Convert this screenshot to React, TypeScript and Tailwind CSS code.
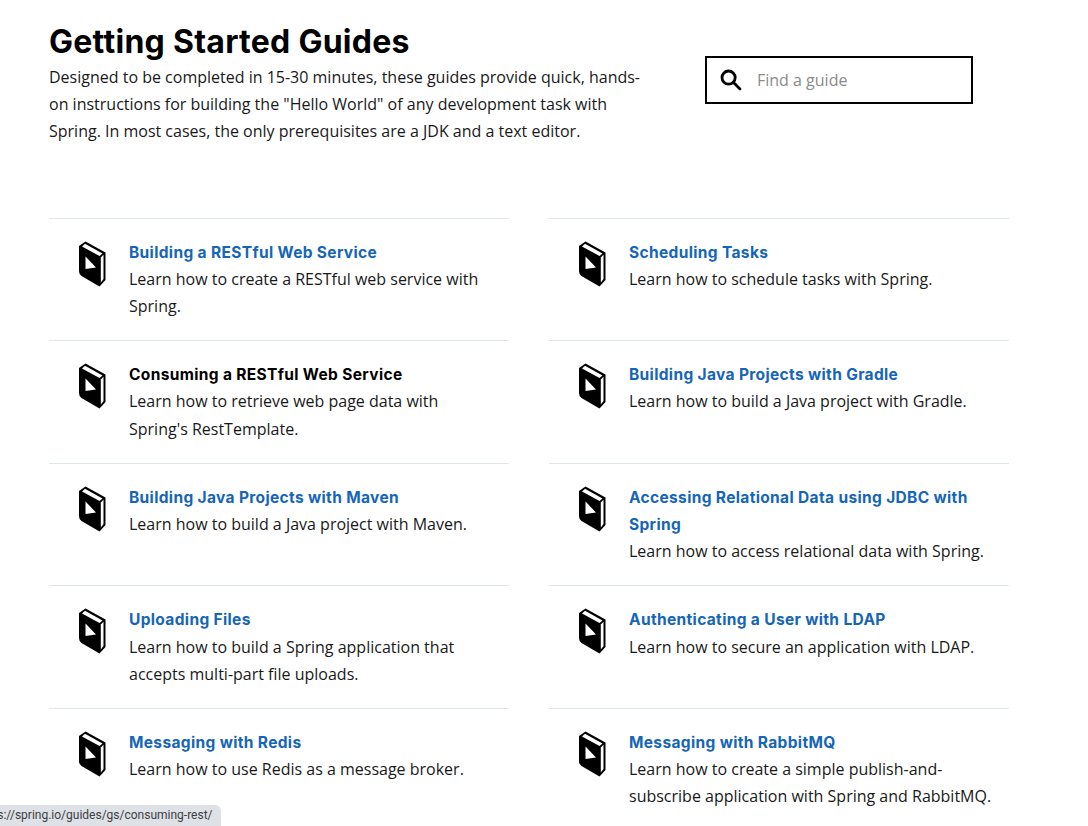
const guides = [
  ["Building a RESTful Web Service", "Learn how to create a RESTful web service with Spring."],
  ["Scheduling Tasks", "Learn how to schedule tasks with Spring."],
  ["Consuming a RESTful Web Service", "Learn how to retrieve web page data with Spring's RestTemplate."],
  ["Building Java Projects with Gradle", "Learn how to build a Java project with Gradle."],
  ["Building Java Projects with Maven", "Learn how to build a Java project with Maven."],
  ["Accessing Relational Data using JDBC with Spring", "Learn how to access relational data with Spring."],
  ["Uploading Files", "Learn how to build a Spring application that accepts multi-part file uploads."],
  ["Authenticating a User with LDAP", "Learn how to secure an application with LDAP."],
  ["Messaging with Redis", "Learn how to use Redis as a message broker."],
  ["Messaging with RabbitMQ", "Learn how to create a simple publish-and-subscribe application with Spring and RabbitMQ."],
];

const BookIcon = () => (
  <svg width="28" height="46" viewBox="0 0 28 46" className="shrink-0">
    <path d="M7.5 0.5 L27.5 11.5 L27.5 39 L21.5 45.5 L3.5 35 Q1 33.5 1 30 L1 5 Z" fill="#000" />
    <path d="M7 2.8 L24.5 12.5 L21.5 15 L4 5.5 Z" fill="#fff" />
    <path d="M22.8 16.5 L25.5 13.8 L25.5 38 L22.8 41.5 Z" fill="#fff" />
    <path d="M7.5 15.5 L18 26.5 L7.5 28 Z" fill="#fff" />
  </svg>
);

const GuideRow = ({ title, text, active }: { title: string; text: string; active: boolean }) => (
  <div className="flex gap-[23px] border-t border-[#dfe8e8] py-[20px] pr-[12px] pl-[29px]">
    <div className="pt-[2px]">
      <BookIcon />
    </div>
    <div>
      <div
        className={`font-['Inter',sans-serif] text-[15.5px] font-bold tracking-[0.35px] ${active ? "text-[#000]" : "text-[#1565b8]"}`}
      >
        {title}
      </div>
      <div className="text-[#191919]">{text}</div>
    </div>
  </div>
);

export default function App() {
  return (
    <div className="relative h-screen overflow-hidden bg-white pl-[49px] font-['Open_Sans',sans-serif] text-[16px] leading-[27.2px] text-[#191919]">
      <div className="flex h-[217.6px] items-start">
        <div className="w-[600px] pt-[21px]">
          <h1 className="font-['Inter',sans-serif] text-[32px] font-bold leading-[41px] tracking-[0.27px] text-black">
            Getting Started Guides
          </h1>
          <p className="mt-[2px]">
            Designed to be completed in 15-30 minutes, these guides provide quick, hands-on instructions for building
            the "Hello World" of any development task with Spring. In most cases, the only prerequisites are a JDK and
            a text editor.
          </p>
        </div>
        <div className="mt-[56px] ml-[56px] flex h-[48px] w-[268px] items-center border-2 border-black pl-[13px]">
          <svg width="22" height="22" viewBox="0 0 22 22" fill="none" stroke="#000" strokeWidth="2.8">
            <circle cx="8.6" cy="8.6" r="6.6" />
            <path d="M13.5 13.5 L20 20" strokeLinecap="round" />
          </svg>
          <span className="mt-[2px] ml-[15px] text-[#8a8a8a]">Find a guide</span>
        </div>
      </div>
      <div className="grid w-[960px] grid-cols-2 gap-x-[40px]">
        {guides.map(([title, text]) => (
          <GuideRow key={title} title={title} text={text} active={title === "Consuming a RESTful Web Service"} />
        ))}
      </div>
      <div className="absolute bottom-0 left-0 h-[21px] w-[221px] overflow-hidden rounded-tr-[6px] bg-[#dee1e6] font-['Roboto',sans-serif] text-[12px] leading-[21px] whitespace-nowrap text-[#3c4043]">
        <span className="ml-[-24px] inline-block">https://spring.io/guides/gs/consuming-rest/</span>
      </div>
    </div>
  );
}
